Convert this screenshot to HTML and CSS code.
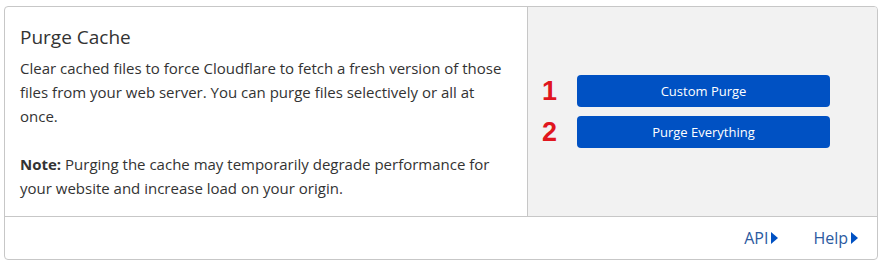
FILE: index.html
```html
<!DOCTYPE html>
<html lang="en">
<head>
<title>Purge Cache</title>
<link rel="stylesheet" href="styles.css">
</head>
<body>

<div class="card">
  <div class="card-body">
    <div class="card-text">
      <h2 class="card-title">Purge Cache</h2>
      <p>Clear cached files to force Cloudflare to fetch a fresh version of those files from your web server. You can purge files selectively or all at once.</p>
      <p><strong>Note:</strong> Purging the cache may temporarily degrade performance for your website and increase load on your origin.</p>
    </div>
    <div class="card-control">
      <div class="control-row">
        <span class="step">1</span>
        <button type="button" class="purge-button">Custom Purge</button>
      </div>
      <div class="control-row">
        <span class="step">2</span>
        <button type="button" class="purge-button">Purge Everything</button>
      </div>
    </div>
  </div>
  <div class="card-footer">
    <a href="#" class="footer-link">API<span class="caret"></span></a>
    <a href="#" class="footer-link">Help<span class="caret"></span></a>
  </div>
</div>

</body>
</html>
```

FILE: styles.css
```css
body {
  font-family: "Open Sans", Arial, sans-serif;
  background-color: #fff;
  margin: 0;
  padding: 6px 4px 0 4px;
  color: #333;
}

.card {
  width: 872px;
  border: 1px solid #c7c7c7;
  border-radius: 4px;
  overflow: hidden;
}

.card-body {
  display: flex;
  height: 209px;
  border-bottom: 1px solid #c7c7c7;
}

.card-text {
  width: 507px;
  padding: 15px 0 0 15px;
  border-right: 1px solid #c7c7c7;
}

.card-title {
  margin: 0 0 4px 0;
  font-size: 19px;
  font-weight: 500;
  line-height: 30px;
  color: #333;
}

.card-text p {
  margin: 0 0 24px 0;
  font-size: 15px;
  line-height: 24px;
  padding-right: 20px;
}

.card-text strong {
  font-weight: 700;
}

.card-control {
  flex: 1;
  background-color: #f2f2f2;
  padding-top: 68px;
}

.control-row {
  display: flex;
  align-items: center;
  margin-bottom: 9px;
}

.step {
  width: 29px;
  text-align: right;
  font-family: Arial, sans-serif;
  font-weight: 700;
  font-size: 27px;
  color: #e0161e;
  margin-right: 20px;
}

.purge-button {
  width: 253px;
  height: 32px;
  border: none;
  border-radius: 4px;
  background-color: #0051c3;
  color: #fff;
  font-family: "Open Sans", Arial, sans-serif;
  font-size: 13px;
  cursor: pointer;
}

.card-footer {
  display: flex;
  justify-content: flex-end;
  height: 42px;
  align-items: center;
  padding-right: 19px;
  gap: 35px;
}

.footer-link {
  color: #2c5aa0;
  text-decoration: none;
  font-size: 16px;
  display: flex;
  align-items: center;
}

.caret {
  display: inline-block;
  width: 0;
  height: 0;
  margin-left: 3px;
  border-top: 6px solid transparent;
  border-bottom: 6px solid transparent;
  border-left: 7px solid #0051c3;
}
```
